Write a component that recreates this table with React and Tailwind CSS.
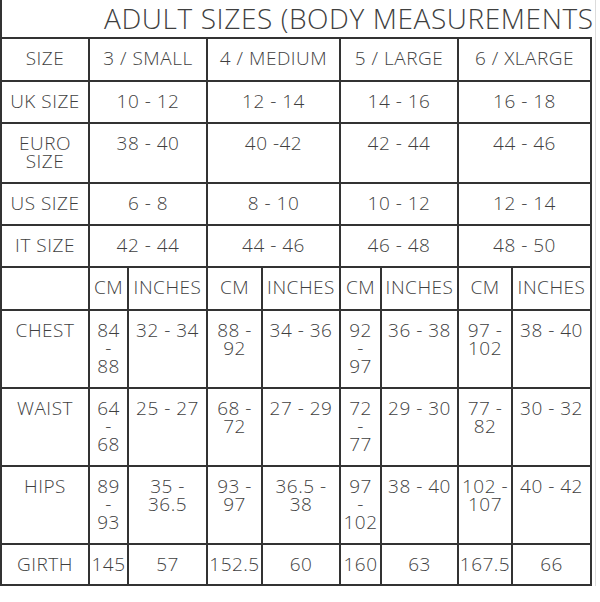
import React from 'react';

const sizeHeads = ['3 / SMALL', '4 / MEDIUM', '5 / LARGE', '6 / XLARGE'];

const spanRows = [
  ['UK SIZE', ['10 - 12', '12 - 14', '14 - 16', '16 - 18']],
  ['EURO\nSIZE', ['38 - 40', '40 -42', '42 - 44', '44 - 46']],
  ['US SIZE', ['6 - 8', '8 - 10', '10 - 12', '12 - 14']],
  ['IT SIZE', ['42 - 44', '44 - 46', '46 - 48', '48 - 50']],
];

const bodyRows = [
  ['CHEST', ['84\n-\n88', '32 - 34', '88 -\n92', '34 - 36', '92\n-\n97', '36 - 38', '97 -\n102', '38 - 40']],
  ['WAIST', ['64\n-\n68', '25 - 27', '68 -\n72', '27 - 29', '72\n-\n77', '29 - 30', '77 -\n82', '30 - 32']],
  ['HIPS', ['89\n-\n93', '35 -\n36.5', '93 -\n97', '36.5 -\n38', '97\n-\n102', '38 - 40', '102 -\n107', '40 - 42']],
  ['GIRTH', ['145', '57', '152.5', '60', '160', '63', '167.5', '66']],
];

const Cell = ({ children, span }) => (
  <div
    className={`bg-white pt-[10px] text-center whitespace-pre-line leading-[18px] ${span ? 'col-span-2' : ''}`}
  >
    {children}
  </div>
);

export default function App() {
  return (
    <div
      className="w-[600px] h-[602px] overflow-hidden bg-white text-[#3f3f3f] flex"
      style={{ fontFamily: '"Open Sans", "Liberation Sans", sans-serif' }}
    >
      <div className="w-[592px] shrink-0">
        <div className="h-[39px] border-l-2 border-b-2 border-[#333] pl-[102px] whitespace-nowrap text-[28px] leading-[36px] tracking-[0.6px] font-light">
          ADULT SIZES (BODY MEASUREMENTS
        </div>
        <div className="grid grid-cols-[86px_37px_77px_53px_76px_39px_75px_52px_77px] grid-rows-[41px_40px_58px_40px_40px_41px_76px_76px_76px_39px] gap-[2px] px-[2px] pb-[2px] bg-[#333] text-[19px] tracking-[0.5px] font-light">
          <Cell>SIZE</Cell>
          {sizeHeads.map((h) => (
            <Cell key={h} span>{h}</Cell>
          ))}

          {spanRows.map(([label, vals]) => (
            <React.Fragment key={label}>
              <Cell>{label}</Cell>
              {vals.map((v, i) => (
                <Cell key={i} span>{v}</Cell>
              ))}
            </React.Fragment>
          ))}

          <Cell></Cell>
          {[0, 1, 2, 3].map((i) => (
            <React.Fragment key={i}>
              <Cell>CM</Cell>
              <Cell>INCHES</Cell>
            </React.Fragment>
          ))}

          {bodyRows.map(([label, vals]) => (
            <React.Fragment key={label}>
              <Cell>{label}</Cell>
              {vals.map((v, i) => (
                <Cell key={i}>{v}</Cell>
              ))}
            </React.Fragment>
          ))}
        </div>
      </div>
      <div className="ml-[3px] w-[1px] h-[586px] bg-[#dcdcdc]" />
    </div>
  );
}
